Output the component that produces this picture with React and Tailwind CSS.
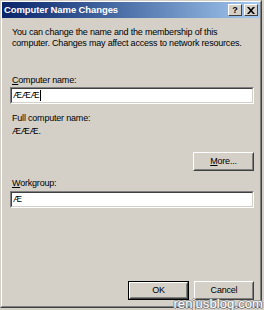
export default function App() {
  const font = "font-['Liberation_Sans',Arial,sans-serif]";
  return (
    <div className={`w-[264px] h-[310px] bg-[#d4d0c8] ${font} text-[9px] tracking-[-0.2px] text-black relative overflow-hidden`}>
      {/* window frame */}
      <div className="w-[262px] h-[308px] border border-t-[#d4d0c8] border-l-[#d4d0c8] border-r-[#404040] border-b-[#404040]">
        <div className="h-full border border-t-white border-l-white border-r-[#808080] border-b-[#808080] flex flex-col">
          {/* title bar */}
          <div className="h-[16px] bg-gradient-to-r from-[#0a246a] to-[#a6caf0] flex items-center justify-between pl-[2px] pr-[2px]">
            <span className="text-white font-bold text-[9.5px] tracking-[-0.1px] leading-none">Computer Name Changes</span>
            <div className="flex gap-[2px]">
              <TitleButton>?</TitleButton>
              <TitleButton>
                <svg width="8" height="7" viewBox="0 0 8 7">
                  <path d="M0 0h2l2 2.2L6 0h2L5 3.5 8 7H6L4 4.8 2 7H0l3-3.5z" fill="black" />
                </svg>
              </TitleButton>
            </div>
          </div>

          {/* body */}
          <div className="flex-1 flex flex-col pl-[8px] pr-[6px] pt-[9px] pb-[6px]">
            <p className="leading-[11px] pl-[2px]">
              You can change the name and the membership of this
              <br />
              computer. Changes may affect access to network resources.
            </p>

            <label className="mt-[26px] leading-[11px] pl-[2px]">
              <span className="underline">C</span>omputer name:
            </label>
            <Field className="mt-[1px]">
              <span className="leading-none">ÆÆÆ</span>
              <span className="w-px h-[11px] bg-black ml-px" />
            </Field>

            <p className="mt-[9px] leading-[11px] pl-[2px]">Full computer name:</p>
            <p className="mt-[2px] leading-[11px] pl-[2px]">ÆÆÆ.</p>

            <div className="mt-[15px] flex justify-end">
              <Button className="w-[61px]">
                <span className="underline">M</span>ore...
              </Button>
            </div>

            <label className="mt-[7px] leading-[11px] pl-[2px]">
              <span className="underline">W</span>orkgroup:
            </label>
            <Field className="mt-[2px]">
              <span className="leading-none">Æ</span>
            </Field>

            <div className="mt-auto flex justify-end gap-[5px]">
              <Button className="w-[61px]" primary>OK</Button>
              <Button className="w-[60px]">Cancel</Button>
            </div>
          </div>
        </div>
      </div>

      {/* watermark */}
      <span className="absolute right-[1px] bottom-0 text-[13px] text-white leading-none tracking-[0.1px] [text-shadow:1px_0_0_#8a8a8a,-1px_0_0_#8a8a8a,0_1px_0_#8a8a8a,0_-1px_0_#8a8a8a]">
        renjusblog.com
      </span>
    </div>
  );
}

function Field({ children, className = '' }) {
  return (
    <div className={`${className} h-[17px] bg-white border border-t-[#808080] border-l-[#808080] border-r-white border-b-white`}>
      <div className="h-full border border-t-[#404040] border-l-[#404040] border-r-[#d4d0c8] border-b-[#d4d0c8] flex items-center pl-[1px]">
        {children}
      </div>
    </div>
  );
}

function TitleButton({ children }) {
  return (
    <div className="w-[14px] h-[12px] bg-[#d4d0c8] border border-t-white border-l-white border-r-[#404040] border-b-[#404040] flex items-center justify-center text-[9px] font-bold leading-none">
      {children}
    </div>
  );
}

function Button({ children, className = '', primary }) {
  return (
    <div className={`${className} h-[19px] ${primary ? 'border border-black' : ''}`}>
      <div className="h-full bg-[#d4d0c8] border border-t-white border-l-white border-r-[#404040] border-b-[#404040]">
        <div className="h-full border border-t-[#d4d0c8] border-l-[#d4d0c8] border-r-[#808080] border-b-[#808080] flex items-center justify-center leading-none">
          {children}
        </div>
      </div>
    </div>
  );
}
